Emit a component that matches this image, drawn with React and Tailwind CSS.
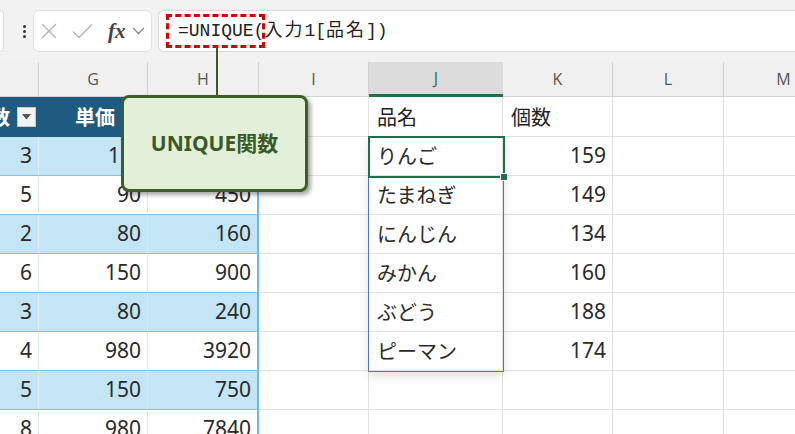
import React from "react";

const CELL = "\"Noto Sans CJK JP\", \"Noto Sans\", sans-serif";
const NUM = "\"Noto Sans\", \"Noto Sans CJK JP\", sans-serif";

const rows = [
    { f: "3", g: "120", h: "360", j: "りんご", k: "159" },
    { f: "5", g: "90", h: "450", j: "たまねぎ", k: "149" },
    { f: "2", g: "80", h: "160", j: "にんじん", k: "134" },
    { f: "6", g: "150", h: "900", j: "みかん", k: "160" },
    { f: "3", g: "80", h: "240", j: "ぶどう", k: "188" },
    { f: "4", g: "980", h: "3920", j: "ピーマン", k: "174" },
    { f: "5", g: "150", h: "750" },
    { f: "8", g: "980", h: "7840" },
];

function DropBtn() {
    return (
        <div className="w-[19px] h-[20px] shrink-0 bg-[#f4f4f4] border border-[#c8c8c8] flex items-center justify-center">
            <svg width="9" height="6" viewBox="0 0 9 6"><path d="M0 0h9L4.5 5.5z" fill="#555" /></svg>
        </div>
    );
}

function ColHead({ w, label, active }) {
    if (active)
        return (
            <div className={w + " shrink-0 h-full flex items-center justify-center bg-[#dcdcdc] border-b-[3px] border-[#1e7145] text-[#1e7145]"}>
                {label}
            </div>
        );
    return (
        <div className={w + " shrink-0 h-full flex items-center justify-center border-b border-r border-[#d2d2d2] text-[#555]"}>
            {label}
        </div>
    );
}

function Plain({ w, children, right }) {
    return (
        <div
            className={w + " shrink-0 h-full flex items-center border-r border-b border-[#e1e1e1] " + (right ? "justify-end pr-[6px] text-[21px]" : "pl-[8px]")}
            style={right ? { fontFamily: NUM } : undefined}
        >
            {children}
        </div>
    );
}

export default function App() {
    return (
        <div className="relative w-[795px] h-[434px] overflow-hidden bg-white" style={{ fontFamily: CELL }}>
            {/* formula bar */}
            <div className="h-[62px] bg-[#f2f2f2] flex items-start pt-[10px]">
                <div className="w-[4px] h-[42px] shrink-0 bg-white border border-l-0 border-[#dcdcdc] rounded-r-[4px]" />
                <div className="ml-[12px] w-[17px] h-[42px] flex flex-col items-center justify-center gap-[2px]">
                    <span className="w-[3px] h-[3px] rounded-full bg-[#333]" />
                    <span className="w-[3px] h-[3px] rounded-full bg-[#333]" />
                    <span className="w-[3px] h-[3px] rounded-full bg-[#333]" />
                </div>
                <div className="w-[119px] h-[42px] shrink-0 bg-white border border-[#e1e1e1] rounded-md flex items-center">
                    <svg className="ml-[7px]" width="16" height="16" viewBox="0 0 16 16">
                        <path d="M1 1L15 15M15 1L1 15" stroke="#b4b4b4" strokeWidth="1.4" fill="none" />
                    </svg>
                    <svg className="ml-[15px]" width="21" height="16" viewBox="0 0 21 16">
                        <path d="M1 8.5L7 14.5L20 1.5" stroke="#b4b4b4" strokeWidth="1.4" fill="none" />
                    </svg>
                    <span className="ml-[15px] text-[21px] italic font-bold text-[#444] leading-none" style={{ fontFamily: "\"Liberation Serif\", serif" }}>fx</span>
                    <svg className="ml-[6px]" width="13" height="8" viewBox="0 0 13 8">
                        <path d="M1 1L6.5 6.5L12 1" stroke="#8a8a8a" strokeWidth="1.3" fill="none" />
                    </svg>
                </div>
                <div className="ml-[6px] flex-1 h-[42px] bg-white border border-r-0 border-[#dadada] rounded-l-md flex items-center pl-[19px] text-[18px] text-[#222]" style={{ fontFamily: "\"Liberation Mono\", \"Noto Sans CJK JP\", monospace" }}>
                    <span>=UNIQUE(</span>
                    <span className="tracking-[2px]">入力</span>
                    <span>1[</span>
                    <span className="tracking-[2px]">品名</span>
                    <span>])</span>
                </div>
            </div>

            {/* sheet */}
            <div className="relative">
                <div className="h-[35px] bg-[#f0f0f0] flex text-[16px]" style={{ fontFamily: "\"Open Sans\", sans-serif" }}>
                    <ColHead w="w-[39px]" label="" />
                    <ColHead w="w-[109px]" label="G" />
                    <ColHead w="w-[111px]" label="H" />
                    <ColHead w="w-[110px]" label="I" />
                    <ColHead w="w-[134px]" label="J" active />
                    <ColHead w="w-[110px]" label="K" />
                    <ColHead w="w-[111px]" label="L" />
                    <ColHead w="w-[120px]" label="M" />
                </div>

                {/* table header row */}
                <div className="h-[40px] flex text-[20px] text-[#222]">
                    <div className="w-[39px] shrink-0 h-full bg-[#1f5b80] flex items-center justify-end pr-[3px] overflow-hidden border-b border-[#1f5b80]">
                        <span className="shrink-0 font-bold text-white">数</span>
                        <span className="ml-[7px]"><DropBtn /></span>
                    </div>
                    <div className="w-[109px] shrink-0 h-full bg-[#1f5b80] flex items-center justify-end pr-[4px] border-b border-[#1f5b80]">
                        <span className="font-bold text-white">単価</span>
                        <span className="ml-[10px]"><DropBtn /></span>
                    </div>
                    <div className="w-[111px] shrink-0 h-full bg-[#1f5b80] flex items-center justify-end pr-[4px] border-b border-r border-[#1f5b80]">
                        <span className="ml-[10px]"><DropBtn /></span>
                    </div>
                    <Plain w="w-[110px]" />
                    <Plain w="w-[134px]">品名</Plain>
                    <Plain w="w-[110px]">個数</Plain>
                    <Plain w="w-[111px]" />
                    <Plain w="w-[120px]" />
                </div>

                {rows.map((r, i) => {
                    const band = i % 2 === 0 ? "bg-[#c4e5f6]" : "bg-white";
                    const first = i === 0;
                    return (
                        <div key={i} className="h-[39px] flex text-[20px] text-[#2a2a2a]">
                            <div className={"w-[39px] shrink-0 h-full flex items-center justify-end pr-[6px] text-[21px] border-b border-r border-b-[#7cc3ea] border-r-[#dfe8ee] " + band} style={{ fontFamily: NUM }}>{r.f}</div>
                            <div className={"w-[109px] shrink-0 h-full flex items-center justify-end text-[21px] border-b border-r border-b-[#7cc3ea] border-r-[#dfe8ee] " + (first ? "pr-[3px] " : "pr-[6px] ") + band} style={{ fontFamily: NUM }}>
                                {first ? <><span>1</span><span className="invisible">20</span></> : r.g}
                            </div>
                            <div className={"w-[111px] shrink-0 h-full flex items-center justify-end pr-[6px] text-[21px] border-b border-r-2 border-b-[#7cc3ea] border-r-[#6cb8e4] " + band} style={{ fontFamily: NUM }}>{first ? "" : r.h}</div>
                            <Plain w="w-[110px]" />
                            <Plain w="w-[134px]">{r.j}</Plain>
                            <Plain w="w-[110px]" right>{r.k}</Plain>
                            <Plain w="w-[111px]" />
                            <Plain w="w-[120px]" />
                        </div>
                    );
                })}

                {/* spill range + active cell */}
                <div className="absolute left-[368px] top-[75px] w-[136px] h-[235px] border-[1.5px] border-[#4f78c4] shadow-[0_4px_10px_rgba(0,0,0,0.12)]" />
                <div className="absolute left-[368px] top-[74px] w-[137px] h-[42px] border-2 border-[#1e7145]" />
                <div className="absolute left-[500px] top-[111px] w-[8px] h-[8px] bg-[#1e7145] border border-white" />
            </div>

            {/* annotation */}
            <div className="absolute left-[166px] top-[14px] w-[99px] h-[34px] border-[3px] border-dashed border-[#d40000]" />
            <div className="absolute left-[216px] top-[48px] w-[2px] h-[49px] bg-[#3b5a27]" />
            <div className="absolute left-[121px] top-[95px] w-[187px] h-[97px] rounded-lg border-[3px] border-[#3d5d29] bg-[#e2efd9] shadow-[3px_3px_4px_rgba(0,0,0,0.35)] flex items-center justify-center">
                <span className="text-[21px] font-bold text-[#3a5a25]" style={{ fontFamily: "\"Noto Sans\", \"Noto Sans CJK JP\", sans-serif" }}>UNIQUE関数</span>
            </div>
        </div>
    );
}
